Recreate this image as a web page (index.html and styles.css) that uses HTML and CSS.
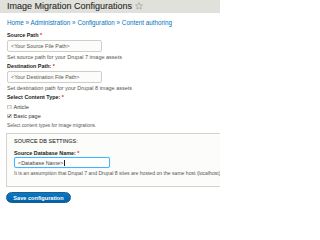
FILE: index.html
```html
<!DOCTYPE html>
<html>
<head>
<meta charset="utf-8">
<link rel="stylesheet" href="styles.css">
</head>
<body>
<header class="page-header">
  <h1 class="title">Image Migration Configurations</h1>
  <svg class="star" viewBox="0 0 20 20" width="8" height="8"><path d="M10 1.5 L12.6 7.2 L18.7 7.6 L14 11.6 L15.5 17.6 L10 14.3 L4.5 17.6 L6 11.6 L1.3 7.6 L7.4 7.2 Z" fill="none" stroke="#9a9a94" stroke-width="1.6" stroke-linejoin="round"/></svg>
</header>
<main class="content">
  <nav class="breadcrumb"><a>Home</a> » <a>Administration</a> » <a>Configuration</a> » <a>Content authoring</a></nav>

  <div class="item">
    <div class="label">Source Path <span class="req">*</span></div>
    <div class="input">&lt;Your Source File Path&gt;</div>
    <div class="desc">Set source path for your Drupal 7 image assets</div>
  </div>

  <div class="item">
    <div class="label">Destination Path: <span class="req">*</span></div>
    <div class="input">&lt;Your Destination File Path&gt;</div>
    <div class="desc">Set destination path for your Drupal 8 image assets</div>
  </div>

  <div class="item">
    <div class="label">Select Content Type: <span class="req">*</span></div>
    <div class="checks">
      <div class="check"><svg class="box" viewBox="0 0 10 10" width="4.5" height="4.5"><rect x="0.6" y="0.6" width="8.8" height="8.8" rx="1" fill="#f4f4f2" stroke="#8e8e8a" stroke-width="1.2"/></svg>Article</div>
      <div class="check"><svg class="box" viewBox="0 0 10 10" width="4.5" height="4.5"><rect x="0.6" y="0.6" width="8.8" height="8.8" rx="1" fill="#f4f4f2" stroke="#8e8e8a" stroke-width="1.2"/><path d="M2.2 5 L4.3 7.6 L8.6 1.4" fill="none" stroke="#222" stroke-width="1.8"/></svg>Basic page</div>
    </div>
    <div class="desc small">Select content types for image migrations.</div>
  </div>

  <div class="fieldset">
    <div class="legend">SOURCE DB SETTINGS:</div>
    <div class="label">Source Database Name: <span class="req">*</span></div>
    <div class="input focus">&lt;Database Name&gt;<span class="caret"></span></div>
    <div class="desc">It is an assumption that Drupal 7 and Drupal 8 sites are hosted on the same host (localhost)</div>
  </div>

  <div class="actions"><span class="button">Save configuration</span></div>
</main>
</body>
</html>
```
FILE: styles.css
```css
html, body {
  margin: 0;
  padding: 0;
  background: #fff;
  overflow: hidden;
}
body {
  width: 220px;
  height: 207px;
  font-family: "Liberation Sans", Arial, sans-serif;
  color: #222;
}
.page-header {
  height: 13px;
  background: #e1e1db;
  display: flex;
  align-items: center;
  padding-left: 7px;
  gap: 3px;
}
.title {
  margin: 0;
  font-size: 9px;
  font-weight: normal;
  line-height: 13px;
  color: #2b2b2b;
  -webkit-text-stroke: 0.1px #2b2b2b;
}
.star {
  display: block;
  margin-top: -1px;
}
.content {
  padding: 0 0 0 7px;
  overflow: hidden;
}
.breadcrumb {
  margin-top: 7px;
  font-size: 6.3px;
  line-height: 6px;
  color: #0074bd;
  white-space: nowrap;
}
.breadcrumb a { color: #0074bd; }
.item {
  margin-top: 6px;
}
.item + .item {
  margin-top: 3px;
}
.label {
  font-size: 5.4px;
  font-weight: bold;
  line-height: 6px;
  color: #222;
}
.req {
  color: #e62600;
}
.input {
  box-sizing: border-box;
  margin-top: 2px;
  width: 95px;
  height: 12px;
  border: 1px solid #cfcfca;
  border-radius: 2px;
  background: #fcfcfa;
  font-size: 5.4px;
  line-height: 10px;
  padding-left: 3px;
  color: #555;
  display: flex;
  align-items: center;
}
.desc {
  margin-top: 2px;
  font-size: 5.5px;
  line-height: 6px;
  color: #555;
  white-space: nowrap;
}
.desc.small {
  margin-top: 4px;
  font-size: 4.8px;
}
.checks {
  margin-top: 4px;
  display: flex;
  flex-direction: column;
  gap: 3px;
}
.check {
  display: flex;
  align-items: center;
  gap: 2px;
  font-size: 5.5px;
  line-height: 6px;
  color: #333;
}
.box {
  display: block;
  flex: none;
}
.fieldset {
  margin-top: 4px;
  margin-left: -1px;
  margin-right: -4px;
  border: 1px solid #d4d4cf;
  background: #fcfcfa;
  padding: 4px 0 10px 7px;
}
.legend {
  font-size: 5.4px;
  line-height: 6px;
  color: #333;
  letter-spacing: 0.1px;
  -webkit-text-stroke: 0.1px #333;
}
.fieldset .label {
  margin-top: 6px;
}
.fieldset .input {
  margin-top: 1px;
  width: 96px;
  height: 11px;
  border-color: #40b6ff;
  background: #fff;
  color: #444;
  box-shadow: 0 0 1px #9ad6ff;
}
.caret {
  display: inline-block;
  width: 0.5px;
  height: 6px;
  background: #222;
  margin-left: 0.5px;
}
.fieldset .desc {
  margin-top: 2px;
  font-size: 5.1px;
}
.actions {
  margin-top: 5px;
  margin-left: -1px;
  display: flex;
}
.button {
  display: flex;
  align-items: center;
  justify-content: center;
  box-sizing: border-box;
  width: 65px;
  height: 11px;
  border-radius: 6px;
  background: linear-gradient(#0a7ac2, #0062a8);
  border: 1px solid #1e5c90;
  color: #fff;
  font-size: 5.6px;
  font-weight: bold;
}
```
